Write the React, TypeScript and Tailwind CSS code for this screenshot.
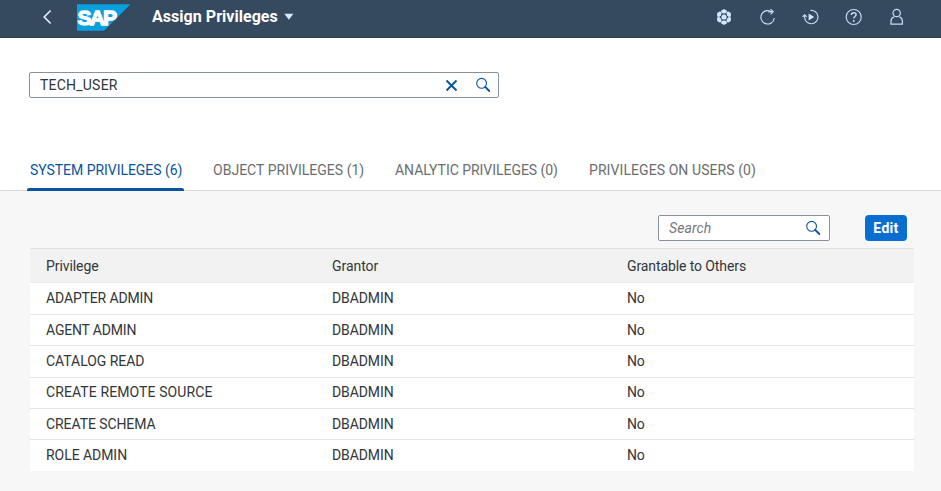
import React from "react";

const tabs = [
  { label: "SYSTEM PRIVILEGES (6)", box: "w-[157px] text-[#0854a0]", text: "tracking-[-0.04px]", active: true },
  { label: "OBJECT PRIVILEGES (1)", box: "ml-[26px] w-[156px] text-[#6a6d70]", text: "tracking-[0.02px]" },
  { label: "ANALYTIC PRIVILEGES (0)", box: "ml-[26px] w-[168px] text-[#6a6d70]", text: "tracking-[-0.04px]" },
  { label: "PRIVILEGES ON USERS (0)", box: "ml-[26px] w-[172px] text-[#6a6d70]", text: "tracking-[0.08px]" },
];

const rows = [
  { name: "ADAPTER ADMIN", h: "h-[32px]", text: "tracking-[-0.14px]" },
  { name: "AGENT ADMIN", h: "h-[31px]", text: "tracking-[-0.18px]" },
  { name: "CATALOG READ", h: "h-[32px]", text: "tracking-[-0.04px]" },
  { name: "CREATE REMOTE SOURCE", h: "h-[31px] pb-px", text: "tracking-[0.1px]" },
  { name: "CREATE SCHEMA", h: "h-[31px]", text: "tracking-[-0.08px]" },
  { name: "ROLE ADMIN", h: "h-[31px]", text: "tracking-[-0.05px]" },
];

function SearchIcon() {
  return (
    <svg width="16" height="16" viewBox="0 0 16 16" fill="none" stroke="#0854a0">
      <circle cx="6.6" cy="6.3" r="4.9" strokeWidth="1.1" />
      <path d="M10.2 9.9 L14.3 14" strokeWidth="1.9" strokeLinecap="round" />
    </svg>
  );
}

function Logo() {
  return (
    <svg width="54" height="27" viewBox="0 0 54 27">
      <path d="M0 0.3H53.5L27 26.8H0Z" fill="#0a9fdf" />
      <text
        x="0.6"
        y="21"
        fill="#fff"
        stroke="#fff"
        strokeWidth="1.3"
        fontFamily="Liberation Sans, sans-serif"
        fontWeight="700"
        fontSize="21"
        letterSpacing="-1.9"
      >
        SAP
      </text>
    </svg>
  );
}

function CopilotIcon() {
  return (
    <svg className="mr-px" width="18" height="18" viewBox="0 0 18 18" fill="#d1e8ff">
      <circle cx="9" cy="9" r="2.6" />
      {[0, 60, 120, 180, 240, 300].map((a) => (
        <g key={a} transform={`rotate(${a} 9 9)`}>
          <path d="M6 2.8 L9 1.1 L12 2.8 L11.3 4.9 L9 5.5 L6.7 4.9Z" />
        </g>
      ))}
    </svg>
  );
}

export default function App() {
  return (
    <div className="flex h-[491px] w-[941px] flex-col overflow-hidden bg-white font-['Roboto','Noto_Sans',sans-serif] text-[14px] text-[#32363a]">
      <header className="flex h-[38px] shrink-0 border-b border-[#2c3d4f] bg-[#354a5f]">
        <svg className="ml-[42px] mt-[9px]" width="10" height="16" viewBox="0 0 10 16" fill="none" stroke="#e3f0fd" strokeWidth="1.6">
          <path d="M8.6 1.5 L2.2 8 L8.6 14.5" />
        </svg>
        <div className="ml-[25px] mt-1">
          <Logo />
        </div>
        <h1 className="ml-[21px] mt-[6px] w-[127px] whitespace-nowrap text-[16px] font-bold leading-[21px] tracking-[0.04px] text-white">Assign Privileges</h1>
        <svg className="ml-[5px] mt-[13px]" width="10" height="8" viewBox="0 0 10 8" fill="#d9ebfc">
          <path d="M0.3 0.8H9.4L4.9 6.8Z" />
        </svg>
        <div className="ml-auto mr-[35px] mt-2 flex h-[18px] gap-[25px]">
          <CopilotIcon />
          <svg width="18" height="18" viewBox="0 0 18 18" fill="none" stroke="#c4dcf4" strokeWidth="1.15">
            <path d="M13.2 4.4A6.7 6.7 0 1 0 15.3 10M9.4 3.8H14M11.6 1.2L14.2 3.8L11.6 6.4" />
          </svg>
          <svg width="18" height="18" viewBox="0 0 18 18" fill="none" stroke="#c4dcf4" strokeWidth="1.2">
            <path d="M8.5 2.4A6.7 6.7 0 1 1 2.6 9.5V6.8M0.5 8.9L2.6 6.8L4.7 8.9" />
            <path d="M6.6 5.6L12.2 9L6.6 12.4Z" fill="#d1e8ff" stroke="none" />
          </svg>
          <svg width="18" height="18" viewBox="0 0 18 18" fill="none" stroke="#c4dcf4" strokeWidth="1.2">
            <circle cx="8.7" cy="9" r="7.5" />
            <path d="M6.3 7.1C6.3 5.5 7.2 4.7 8.7 4.7S11.1 5.6 11.1 6.8C11.1 8.5 8.7 8.6 8.7 10.6" strokeWidth="1.4" />
            <circle cx="8.7" cy="12.9" r="0.9" fill="#d1e8ff" stroke="none" />
          </svg>
          <svg width="18" height="18" viewBox="0 0 18 18" fill="none" stroke="#c4dcf4" strokeWidth="1.25">
            <circle cx="8.7" cy="5" r="3.7" />
            <path d="M6.1 8.8C4 9.5 3 11 3 13V16.2H14.4V13C14.4 11 13.4 9.5 11.3 8.8" />
          </svg>
        </div>
      </header>

      <section className="h-[112px] shrink-0 pl-[29px] pt-[34px]">
        <div className="flex h-[26px] w-[470px] items-center rounded-[2px] border border-[#89919a] pl-[10px] pr-[7px]">
          <span className="flex-1 tracking-[0.22px]">TECH_USER</span>
          <svg className="mr-[17px]" width="13" height="13" viewBox="0 0 13 13" stroke="#0854a0" strokeWidth="1.9">
            <path d="M1.5 1.5L11.5 11.5M11.5 1.5L1.5 11.5" />
          </svg>
          <SearchIcon />
        </div>
      </section>

      <nav className="flex h-[41px] shrink-0 border-b border-[#d9d9d9] pl-[27px]">
        {tabs.map((t) => (
          <div key={t.label} className={`flex h-[41px] flex-col justify-between whitespace-nowrap ${t.box}`}>
            <span className={`pl-[3px] pt-[10px] leading-[20px] ${t.text}`}>{t.label}</span>
            {t.active && <span className="h-[3px] rounded-t-[2px] bg-[#0854a0]" />}
          </div>
        ))}
      </nav>

      <main className="flex-1 bg-[#f7f7f7] pl-[30px] pr-[27px] pt-6">
        <div className="flex h-[33px] items-start justify-end pr-[7px]">
          <div className="flex h-[26px] w-[172px] items-center rounded-[2px] border border-[#89919a] bg-white pl-[10px] pr-2">
            <span className="flex-1 italic tracking-[0.1px] text-[#74777a]">Search</span>
            <SearchIcon />
          </div>
          <button className="ml-[35px] h-[26px] w-[42px] rounded-[4px] bg-[#0a6ed1] text-[14px] font-bold tracking-[0.3px] text-white">Edit</button>
        </div>
        <div className="grid h-[35px] grid-cols-[286px_295px_1fr] items-center border-b border-t border-b-[#ededed] border-t-[#e2e2e2] bg-[#f2f2f2] pl-4 pt-0.5">
          <span className="tracking-[-0.08px]">Privilege</span>
          <span className="tracking-[-0.05px]">Grantor</span>
          <span className="tracking-[-0.1px]">Grantable to Others</span>
        </div>
        {rows.map((r) => (
          <div key={r.name} className={`grid grid-cols-[286px_295px_1fr] items-center border-b border-[#e5e5e5] bg-white pl-4 last:border-b-0 ${r.h}`}>
            <span className={r.text}>{r.name}</span>
            <span className="tracking-[-0.1px]">DBADMIN</span>
            <span className="tracking-[-0.3px]">No</span>
          </div>
        ))}
      </main>
    </div>
  );
}
